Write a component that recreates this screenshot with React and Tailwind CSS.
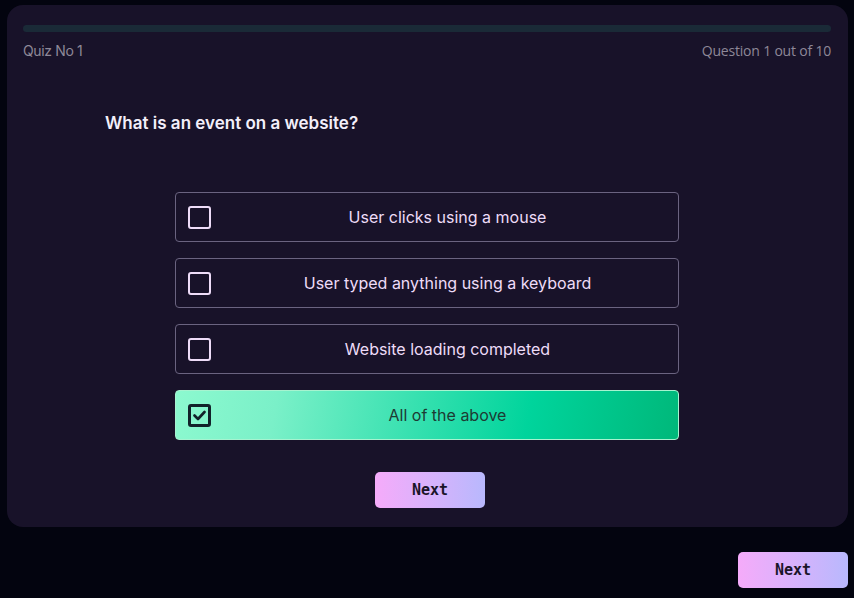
import React, { useState } from 'react';

const options = [
    'User clicks using a mouse',
    'User typed anything using a keyboard',
    'Website loading completed',
    'All of the above',
];

function CheckBox({ checked }) {
    if (checked) {
        return (
            <span className="w-[23px] h-[23px] shrink-0 rounded-[3px] border-[3px] border-[#12222a] flex items-center justify-center">
                <svg width="13" height="11" viewBox="0 0 13 11" fill="none">
                    <path d="M1.5 5.5 L5 9 L11.5 2" stroke="#12222a" strokeWidth="2.6" strokeLinecap="round" strokeLinejoin="round" />
                </svg>
            </span>
        );
    }
    return <span className="w-[23px] h-[23px] shrink-0 rounded-[3px] border-2 border-[#eedcf8]" />;
}

export default function App() {
    const [selected, setSelected] = useState(3);

    return (
        <div className="min-h-[598px] bg-[#03040f] pl-[7px] pr-[6px] pt-[5px] font-['Inter',sans-serif]">
            {/* Quiz card */}
            <div className="bg-[#181229] rounded-[16px] pl-4 pr-[17px] pt-5 pb-5 h-[522px]">
                <div className="h-[7px] rounded-full bg-[#1a2a37]" />
                <div className="flex justify-between mt-[9px] text-[14px] leading-5 text-[#8e8898] tracking-tight">
                    <span>Quiz No 1</span>
                    <span className="font-['Open_Sans',sans-serif] tracking-[-0.2px]">Question 1 out of 10</span>
                </div>

                <h2 className="mt-[50px] ml-[82px] text-[17px] leading-6 font-semibold text-[#f3effa]">
                    What is an event on a website?
                </h2>

                <div className="mt-[57px] flex flex-col items-center gap-4">
                    {options.map((opt, i) => {
                        const active = selected === i;
                        return (
                            <button
                                key={opt}
                                onClick={() => setSelected(i)}
                                className={
                                    active
                                        ? 'w-[504px] h-[50px] rounded-[4px] border border-[#a7f3d0] bg-[linear-gradient(100deg,#8cf9cf_0%,#7af0c8_20%,#00d49c_70%,#00b87a_100%)] flex items-center pl-3 pr-3 text-[16px] text-[#1d3b33]'
                                        : 'w-[504px] h-[50px] rounded-[4px] border border-[#6a6380] flex items-center pl-3 pr-3 text-[16px] text-[#eedcf8]'
                                }
                            >
                                <CheckBox checked={active} />
                                <span className="flex-1 text-center pl-[18px]">{opt}</span>
                            </button>
                        );
                    })}
                </div>

                <div className="flex justify-center mt-8 pl-[6px]">
                    <button className="w-[110px] h-[36px] rounded-[5px] bg-gradient-to-r from-[#f5abfa] to-[#b8b8fd] font-['DejaVu_Sans_Mono',monospace] font-bold text-[15px] text-[#1a1528]">
                        Next
                    </button>
                </div>
            </div>

            <div className="flex justify-end mt-[25px]">
                <button className="w-[110px] h-[36px] rounded-[5px] bg-gradient-to-r from-[#f5abfa] to-[#b8b8fd] font-['DejaVu_Sans_Mono',monospace] font-bold text-[15px] text-[#1a1528]">
                    Next
                </button>
            </div>
        </div>
    );
}
